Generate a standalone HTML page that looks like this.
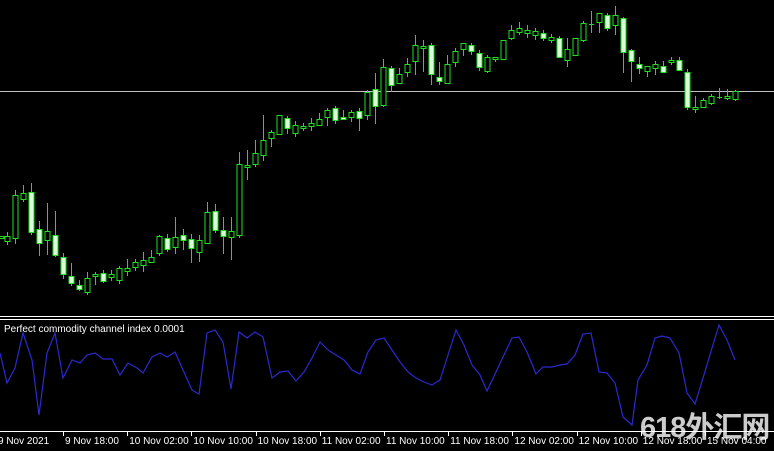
<!DOCTYPE html>
<html><head><meta charset="utf-8"><style>
html,body{margin:0;padding:0;background:#000;overflow:hidden}
#w{position:relative;width:774px;height:451px;background:#000}
svg{position:absolute;left:0;top:0}
.lbl{font-family:"Liberation Sans",sans-serif;font-size:10px;fill:#fff}
#wm{position:absolute;left:640px;top:410px;font:bold 29px "Liberation Sans","Noto Sans CJK SC",sans-serif;color:rgba(255,255,255,0.8);letter-spacing:-1px;white-space:nowrap;line-height:36px}
</style></head><body><div id="w">
<svg id="s" width="774" height="451" xmlns="http://www.w3.org/2000/svg">
<line x1="0" y1="91.5" x2="774" y2="91.5" stroke="#c0c0c0" stroke-width="1"/>
<line x1="0" y1="316.5" x2="774" y2="316.5" stroke="#fff" stroke-width="1"/>
<line x1="0" y1="319.5" x2="774" y2="319.5" stroke="#fff" stroke-width="1"/>
<line x1="0" y1="431.5" x2="774" y2="431.5" stroke="#fff" stroke-width="1"/>
<text class="lbl" x="4" y="332">Perfect commodity channel index 0.0001</text>
<g id="c"></g>
<polyline id="p" fill="none" stroke="#2a2ad0" stroke-width="1.2"/>
<g id="t"></g>
</svg>
<div id="wm">618外汇网</div>
</div>
<script>
var C=[[1,236,238,236,238,0],[7,236,241,232,245,0],[15,195,238,190,244,0],[23,193,199,185,202,0],[31,192,232,183,235,1],[39,229,243,221,256,1],[47,231,240,203,255,0],[55,235,255,211,257,1],[63,257,274,253,279,1],[71,276,283,263,286,1],[79,285,289,280,291,1],[87,278,292,272,295,0],[95,274,276,272,285,0],[103,273,281,270,283,1],[111,274,277,270,281,0],[119,268,280,266,284,0],[127,268,271,259,276,0],[135,262,267,259,271,0],[143,260,265,252,272,0],[151,257,262,250,263,0],[159,236,253,235,256,0],[167,238,249,234,252,1],[175,237,247,217,254,0],[183,235,240,229,250,1],[191,239,248,234,263,1],[199,240,252,235,262,0],[207,212,243,202,244,0],[215,211,230,204,233,1],[223,230,236,217,254,1],[231,231,237,217,260,0],[239,164,235,152,238,0],[247,165,167,150,180,0],[255,153,164,140,167,0],[263,140,155,115,161,0],[271,132,138,130,147,0],[279,115,134,115,135,0],[287,118,128,116,134,1],[295,125,133,121,137,0],[303,126,128,123,131,0],[311,123,126,118,131,0],[319,119,125,113,126,0],[327,110,117,108,126,0],[335,108,120,106,124,1],[343,117,119,110,120,1],[351,112,117,110,122,0],[359,111,118,108,131,1],[367,92,115,90,120,0],[375,89,106,73,124,1],[383,67,105,59,107,0],[391,68,85,66,92,1],[399,74,83,68,84,0],[407,64,72,58,77,0],[415,45,61,35,75,0],[423,46,48,40,72,0],[431,45,74,43,85,1],[439,77,81,62,85,1],[447,64,83,55,83,0],[455,51,62,48,67,0],[463,43,49,43,56,0],[471,45,51,43,55,1],[479,53,67,50,71,1],[487,57,71,55,73,0],[495,57,59,57,62,0],[503,40,59,40,60,0],[511,30,38,25,40,0],[519,28,32,22,35,0],[527,30,33,25,38,0],[535,31,35,28,40,0],[543,33,38,30,41,1],[551,37,40,34,43,0],[559,38,57,36,58,1],[567,49,60,38,67,0],[575,38,55,38,56,0],[583,23,40,21,42,0],[591,24,25,11,33,0],[599,13,22,13,33,0],[607,15,28,13,31,1],[615,15,25,6,35,0],[623,18,52,17,73,1],[631,50,61,49,82,1],[639,64,68,57,74,1],[647,66,71,66,77,0],[655,64,68,61,75,0],[663,66,72,61,73,1],[671,60,62,57,65,0],[679,60,70,57,71,1],[687,72,107,69,110,1],[695,107,109,96,113,0],[703,100,107,98,108,0],[711,96,103,94,105,0],[719,97,98,88,99,0],[727,96,98,89,100,0],[735,91,99,90,101,0]];
var g=document.getElementById('c'),h='',col='#22dd22';
C.forEach(function(c){var x=c[0];
h+='<line x1="'+(x+.5)+'" y1="'+c[3]+'" x2="'+(x+.5)+'" y2="'+c[4]+'" stroke="'+col+'" stroke-width="1"/>';
var bh=Math.max(c[2]-c[1],1);
if(bh<=1){h+='<line x1="'+(x-2)+'" y1="'+(c[1]+.5)+'" x2="'+(x+3)+'" y2="'+(c[1]+.5)+'" stroke="'+col+'"/>';}
else h+='<rect x="'+(x-2)+'" y="'+(c[1]+.5)+'" width="5" height="'+bh+'" fill="'+(c[5]?'#d8ffd8':'#000')+'" stroke="'+col+'" stroke-width="1"/>';});
g.innerHTML=h;
var P=[[0,353],[7,383],[15,368],[23,333],[32,360],[39,415],[47,353],[55,333],[63,378],[72,360],[80,363],[87,355],[95,353],[103,359],[112,359],[120,375],[128,363],[137,368],[143,373],[152,357],[160,353],[167,357],[175,352],[183,370],[192,390],[199,394],[207,333],[215,330],[223,342],[231,389],[239,332],[247,338],[255,332],[263,337],[272,378],[280,372],[288,371],[296,381],[304,372],[312,358],[320,342],[328,350],[336,355],[344,360],[352,370],[360,374],[368,352],[376,340],[384,338],[392,350],[400,362],[408,372],[416,378],[424,382],[432,385],[440,380],[448,355],[456,330],[464,345],[472,365],[480,375],[487,391],[512,338],[519,337],[527,352],[536,374],[543,367],[552,367],[560,365],[567,364],[575,355],[583,334],[591,333],[599,372],[607,373],[615,383],[623,417],[632,425],[638,380],[647,365],[655,338],[662,336],[670,338],[679,353],[687,393],[695,404],[703,378],[712,348],[719,325],[727,340],[735,360]];
document.getElementById('p').setAttribute('points',P.map(function(p){return p.join(',')}).join(' '));
var L=['9 Nov 2021','9 Nov 18:00','10 Nov 02:00','10 Nov 10:00','10 Nov 18:00','11 Nov 02:00','11 Nov 10:00','11 Nov 18:00','12 Nov 02:00','12 Nov 10:00','12 Nov 18:00','15 Nov 04:00'],t='';
L.forEach(function(s,i){var x=i==0?-3:63+(i-1)*64.2;
if(i>0)t+='<line x1="'+(Math.round(x)+.5)+'" y1="432" x2="'+(Math.round(x)+.5)+'" y2="436" stroke="#fff"/>';
t+='<text class="lbl" x="'+(i==0?-2:x+2)+'" y="444">'+s+'</text>';});
document.getElementById('t').innerHTML=t;
</script>
</body></html>
